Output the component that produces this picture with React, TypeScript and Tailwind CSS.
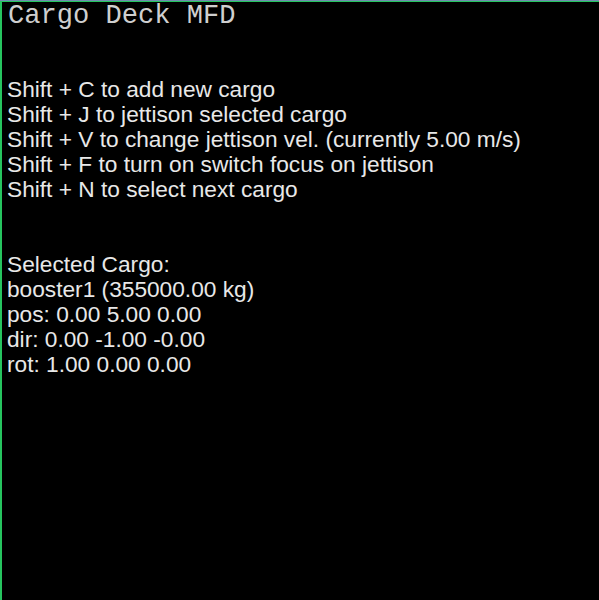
export default function App() {
  const commands = [
    "Shift + C to add new cargo",
    "Shift + J to jettison selected cargo",
    "Shift + V to change jettison vel. (currently 5.00 m/s)",
    "Shift + F to turn on switch focus on jettison",
    "Shift + N to select next cargo",
  ]

  const cargo = [
    "Selected Cargo:",
    "booster1 (355000.00 kg)",
    "pos: 0.00 5.00 0.00",
    "dir: 0.00 -1.00 -0.00",
    "rot: 1.00 0.00 0.00",
  ]

  return (
    <div className="h-[600px] w-[599px] bg-black border-t border-[#6f8fae]">
      <div className="h-full border-t border-l-2 border-[#26c45f] pl-[5px] text-[#e8e8e8] font-['Liberation_Sans',Arial,sans-serif] text-[22.7px] leading-[25px]">
        <div className="font-['Liberation_Mono','Courier_New',monospace] text-[27.1px] leading-[25px] text-[#cfcfcf] pt-[1px] pl-[1px]">
          Cargo Deck MFD
        </div>
        <div className="mt-[49px]">
          {commands.map((line) => (
            <div key={line}>{line}</div>
          ))}
        </div>
        <div className="mt-[50px]">
          {cargo.map((line) => (
            <div key={line}>{line}</div>
          ))}
        </div>
      </div>
    </div>
  )
}
